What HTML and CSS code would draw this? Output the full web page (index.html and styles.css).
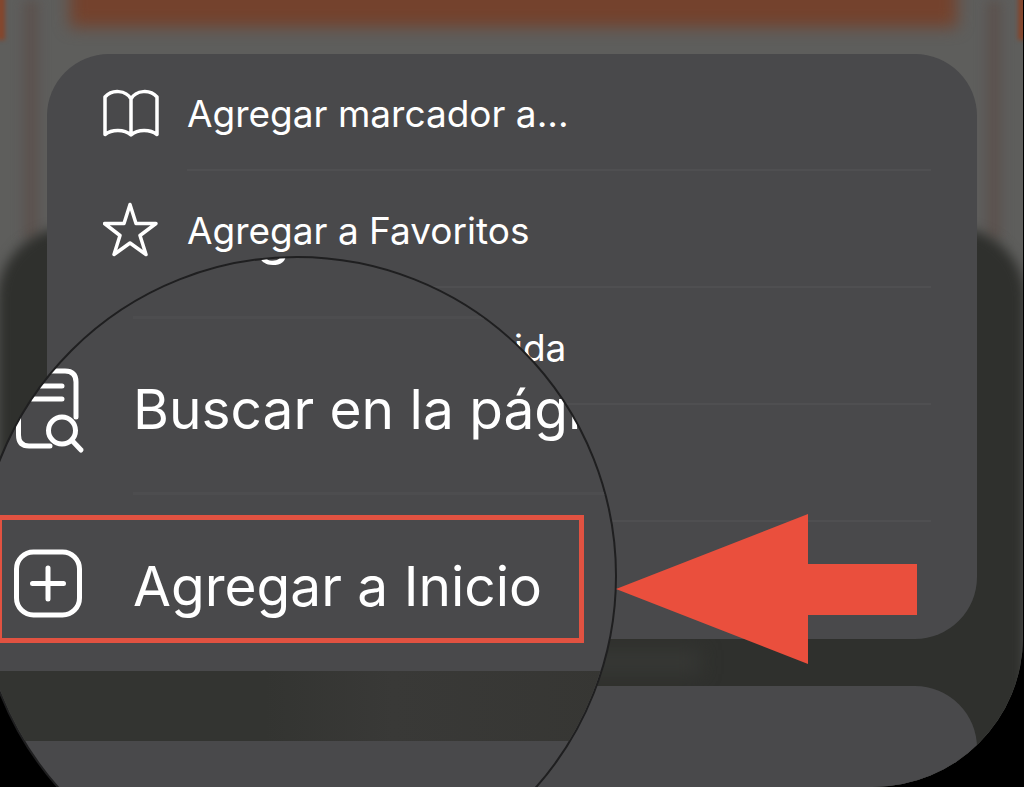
FILE: index.html
```html
<!DOCTYPE html>
<html lang="es">
<head>
  <meta charset="UTF-8" />
  <meta name="viewport" content="width=device-width, initial-scale=1.0" />
  <title>Agregar a Inicio</title>
  <link rel="stylesheet" href="styles.css">
</head>
<body>
  <main class="guide">
    <div class="screen">
      <!-- blurred page behind the share sheet -->
      <div class="backdrop">
        <div class="stripe stripe-left"></div>
        <div class="stripe stripe-right"></div>
        <div class="banner"></div>
        <div class="edge edge-left"></div>
        <div class="edge edge-right"></div>
        <div class="shade"></div>
        <div class="smudge"></div>
      </div>

      <ul class="panel">
        <li>
          <button class="row" type="button">
            <svg class="icon" viewBox="0 0 56 56">
              <path d="M28 50V14C23 5 9 4 2 12V49.500C9 44 21 44 28 50C35 44 47 44 54 49.500V12C47 4 33 5 28 14" />
            </svg>
            <span>Agregar marcador a...</span>
          </button>
        </li>
        <li>
          <button class="row" type="button">
            <svg class="icon" viewBox="0 0 56 56">
              <path d="M27 2.500L33 21.500H53L37 33.500L43 52.500L27 41L11 52.500L17 33.500L1.500 21.500H21Z" />
            </svg>
            <span>Agregar a Favoritos</span>
          </button>
        </li>
        <li>
          <button class="row" type="button">
            <svg class="icon" viewBox="0 0 56 56">
              <rect x="4" y="4" width="48" height="48" rx="10" />
              <path d="M14 18H42M14 28H42M14 38H30" />
            </svg>
            <span>Agregar a nota rápida</span>
          </button>
        </li>
        <li>
          <button class="row" type="button">
            <svg class="icon" viewBox="0 0 56 56">
              <path d="M24 50H14Q6 50 6 42V12Q6 4 14 4H38Q46 4 46 12V26" />
              <circle cx="36" cy="40" r="9" />
              <path d="M43 47L52 54" />
            </svg>
            <span>Buscar en la página</span>
          </button>
        </li>
        <li>
          <button class="row" type="button">
            <svg class="icon" viewBox="0 0 56 56">
              <rect x="4" y="4" width="48" height="48" rx="12" />
              <path d="M28 16V40M16 28H40" />
            </svg>
            <span>Agregar a Inicio</span>
          </button>
        </li>
      </ul>

      <div class="panel panel-next"></div>
    </div>

    <!-- magnifier -->
    <div class="lens" aria-hidden="true">
      <div class="lens-list">
        <div class="lens-row">
          <svg class="lens-icon" viewBox="0 0 72 88"></svg>
          <span>Agregar a nota rápida</span>
        </div>
        <div class="lens-row">
          <svg class="lens-icon" viewBox="0 0 72 88">
            <path d="M36 83H15Q4.500 83 4.500 72V18Q4.500 8 15 8H51Q62 8 62 19V54" />
            <path d="M18 23H48M18 36H48" />
            <circle cx="48" cy="67.500" r="13.500" />
            <path d="M58 77.500L67 87" />
          </svg>
          <span>Buscar en la página</span>
        </div>
        <div class="lens-row">
          <svg class="lens-icon" viewBox="0 0 72 88">
            <rect x="2.500" y="13" width="63" height="63" rx="17" />
            <path d="M34 29V60M18.500 44.500H49.500" />
          </svg>
          <span>Agregar a Inicio</span>
        </div>
      </div>
      <div class="lens-gap"></div>
    </div>

    <div class="highlight"></div>

    <svg class="arrow" viewBox="0 0 302 150" aria-hidden="true">
      <polygon points="0,75 192,0 192,50 301,50 301,101 192,101 192,150" />
    </svg>
  </main>
</body>
</html>
```
FILE: styles.css
```css
* {
  box-sizing: border-box;
}

body {
  margin: 0;
  background-color: #000;
  color: #fff;
  font-family: Inter, "Liberation Sans", sans-serif;
}

.guide {
  position: relative;
  min-height: 100vh;
  overflow: hidden;
}

.screen {
  position: relative;
  display: flex;
  flex-direction: column;
  gap: 47px;
  min-height: 100vh;
  margin-right: 1px;
  padding: 54px 46px 0 47px;
  overflow: hidden;
  border-radius: 0 0 150px 150px;
}

/* blurred page */

.backdrop {
  position: absolute;
  inset: 0;
  background-color: #5e5e5c;
}

.backdrop div {
  position: absolute;
}

.stripe {
  top: 0;
  width: 14px;
  height: 240px;
  background-color: #5b514d;
  filter: blur(6px);
}

.stripe-left {
  left: 24px;
}

.stripe-right {
  right: 22px;
}

.banner {
  top: -30px;
  left: 70px;
  right: 66px;
  height: 57px;
  background-color: #74422d;
  filter: blur(8px);
}

.edge {
  top: -10px;
  width: 8px;
  height: 50px;
  background-color: #85452b;
  filter: blur(2px);
}

.edge-left {
  left: -3px;
}

.edge-right {
  right: -3px;
}

.shade {
  top: 228px;
  left: -2px;
  right: -2px;
  bottom: -20px;
  border-radius: 70px 70px 0 0;
  background-color: #2f302d;
  filter: blur(6px);
}

.smudge {
  left: 580px;
  bottom: 113px;
  width: 120px;
  height: 24px;
  background-color: #373835;
  filter: blur(10px);
}

/* share sheet */

.panel {
  position: relative;
  margin: 0;
  padding: 0;
  border-radius: 62px;
  background-color: #49494b;
  list-style: none;
}

.panel-next {
  flex: 1;
  min-height: 100px;
  border-radius: 62px 62px 0 0;
}

.row {
  display: flex;
  align-items: center;
  gap: 28px;
  width: 100%;
  height: 117px;
  padding: 0 46px 0 56px;
  border: none;
  background: none;
  color: inherit;
  font: inherit;
  font-size: 37px;
  text-align: left;
  cursor: pointer;
}

.row span {
  display: flex;
  flex: 1;
  align-items: center;
  height: 117px;
  padding-top: 4px;
  border-bottom: 2px solid #4f4f51;
}

.panel li:last-child .row span {
  border-bottom: none;
}

.icon {
  flex: none;
  width: 56px;
  height: 56px;
  fill: none;
  stroke: #fff;
  stroke-width: 3.500;
  stroke-linecap: round;
  stroke-linejoin: round;
}

/* magnifier */

.lens {
  position: absolute;
  top: 256px;
  left: -23px;
  width: 640px;
  height: 640px;
  overflow: hidden;
  border: 2px solid #1f1f20;
  border-radius: 50%;
  background-color: #49494b;
}

.lens-list {
  margin-top: -115px;
}

.lens-row {
  display: flex;
  align-items: center;
  gap: 47px;
  height: 176px;
  padding-left: 35px;
  font-size: 55px;
  white-space: nowrap;
}

.lens-row span {
  display: flex;
  flex: 1;
  align-items: center;
  height: 176px;
  padding-top: 6px;
  border-bottom: 3px solid #4d4d4f;
}

.lens-row:last-child span {
  border-bottom: none;
}

.lens-icon {
  flex: none;
  width: 72px;
  height: 88px;
  overflow: visible;
  fill: none;
  stroke: #fff;
  stroke-width: 5;
  stroke-linecap: round;
  stroke-linejoin: round;
}

.lens-gap {
  height: 70px;
  background: linear-gradient(90deg, #333431 45%, #393937 65%, #363633);
}

/* callouts */

.highlight {
  position: absolute;
  top: 515px;
  left: -3px;
  width: 587px;
  height: 128px;
  border: 5px solid #e15241;
}

.arrow {
  position: absolute;
  top: 514px;
  left: 616px;
  width: 302px;
  height: 150px;
  fill: #ea4f3d;
}
```
